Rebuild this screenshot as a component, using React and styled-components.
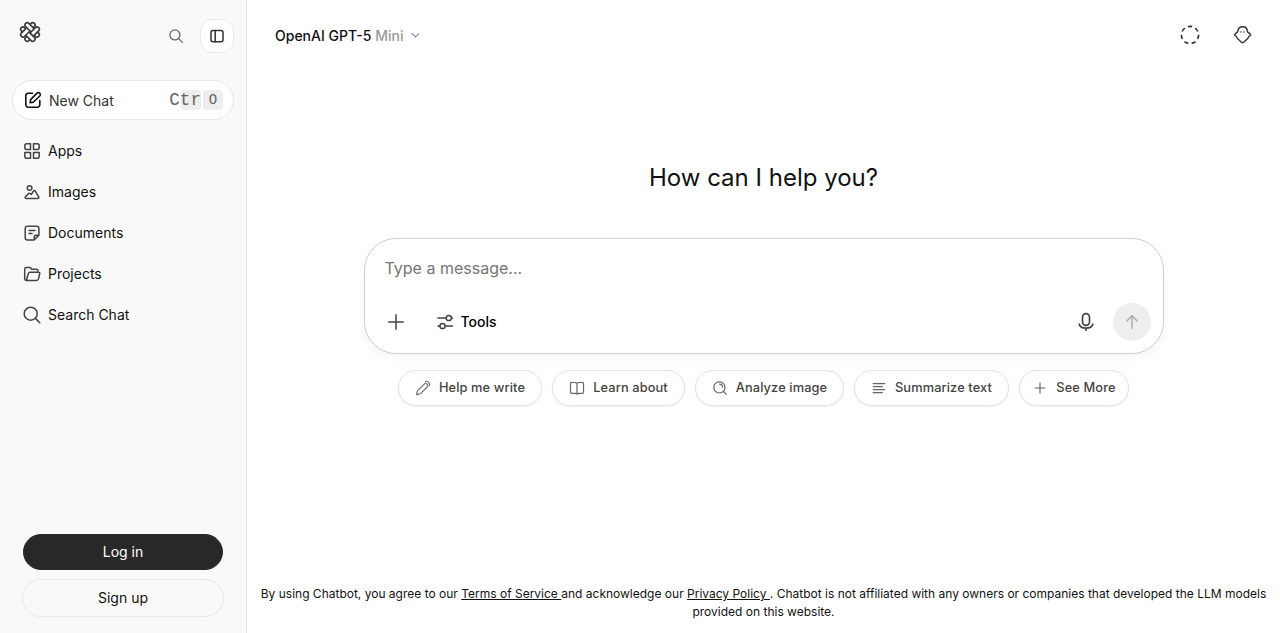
import React from "react";
import styled, { createGlobalStyle } from "styled-components";

const GlobalStyle = createGlobalStyle`
  *, *::before, *::after { box-sizing: border-box; }
  body { margin: 0; background: #fff; color: #111; font-family: Inter, "Liberation Sans", sans-serif; }
  button { font: inherit; color: inherit; background: none; border: 0; padding: 0; cursor: pointer; }
`;

const Page = styled.div`
  display: flex;
  height: 633px;
  overflow: hidden;
`;

const Sidebar = styled.aside`
  width: 247px;
  flex: none;
  display: flex;
  flex-direction: column;
  background: #f9f9f9;
  border-right: 1px solid #e5e5e5;
`;

const SidebarHeader = styled.div`
  display: flex;
  align-items: flex-start;
  height: 80px;
  padding: 19px 12px 0 19px;
`;

const Logo = styled.a`
  display: flex;
  padding-top: 2px;
  margin-right: auto;
`;

const IconButton = styled.button`
  display: flex;
  align-items: center;
  justify-content: center;
  width: 34px;
  height: 34px;
  margin-left: ${(p) => p.$gap || 0}px;
  border-radius: 12px;
  border: 1px solid ${(p) => (p.$raised ? "#e9e9e9" : "transparent")};
  background: ${(p) => (p.$raised ? "#fff" : "transparent")};
`;

const NewChat = styled.button`
  display: flex;
  align-items: center;
  width: 222px;
  height: 40px;
  margin: 0 0 0 12px;
  padding: 0 10px;
  border: 1px solid #e8e8e8;
  border-radius: 20px;
  background: #fff;
  color: #333;
  font-size: 14px;
`;

const NewChatLabel = styled.span`
  margin-left: 6px;
  margin-right: auto;
`;

const Keys = styled.span`
  display: flex;
  align-items: center;
  gap: 2px;
  color: #666;
  font-family: "Liberation Mono", monospace;
`;

const Key = styled.kbd`
  display: flex;
  align-items: center;
  justify-content: ${(p) => (p.$wide ? "flex-end" : "center")};
  width: 20px;
  height: 20px;
  border-radius: 4px;
  background: #eee;
  font-family: inherit;
  font-size: ${(p) => (p.$wide ? 17.6 : 14)}px;
  line-height: 20px;
`;

const Nav = styled.nav`
  display: flex;
  flex-direction: column;
  padding: 10px 0 0 22px;
`;

const NavItem = styled.a`
  display: flex;
  align-items: center;
  gap: 6px;
  height: 41px;
  font-size: 14px;
  color: #111;
`;

const AuthButtons = styled.div`
  display: flex;
  flex-direction: column;
  align-items: center;
  gap: 9px;
  margin-top: auto;
  padding-bottom: 16px;
`;

const AuthButton = styled.button`
  width: ${(p) => (p.$dark ? 200 : 202)}px;
  height: ${(p) => (p.$dark ? 36 : 38)}px;
  padding-bottom: 2px;
  border-radius: 19px;
  border: 1px solid ${(p) => (p.$dark ? "#282828" : "#e8e8e8")};
  background: ${(p) => (p.$dark ? "#282828" : "transparent")};
  color: ${(p) => (p.$dark ? "#fff" : "#111")};
  font-size: 14px;
`;

const Main = styled.main`
  flex: 1;
  display: flex;
  flex-direction: column;
  align-items: center;
`;

const TopBar = styled.header`
  display: flex;
  align-items: center;
  align-self: stretch;
  height: 70px;
  padding: 0 27px 0 28px;
`;

const ModelPicker = styled.button`
  display: flex;
  align-items: center;
  gap: 4px;
  margin-right: auto;
  padding-top: 1px;
  font-size: 14px;
  font-weight: 500;
  color: #111;
`;

const Muted = styled.span`
  color: #999;
`;

const TopIcons = styled.div`
  display: flex;
  gap: 33px;
`;

const Heading = styled.h1`
  margin: 91px 0 0;
  font-size: 24px;
  font-weight: 400;
  line-height: 34px;
  color: #111;
`;

const Composer = styled.section`
  display: flex;
  flex-direction: column;
  justify-content: space-between;
  width: 800px;
  height: 116px;
  margin-top: 43px;
  padding: 16px 12px 12px 20px;
  border: 1px solid #cfcfcf;
  border-radius: 32px;
  background: #fff;
  box-shadow: 0 4px 12px rgba(0, 0, 0, 0.04);
`;

const Prompt = styled.div`
  font-size: 16px;
  line-height: 26px;
  color: #757575;
`;

const ComposerRow = styled.div`
  display: flex;
  align-items: center;
  height: 38px;
`;

const ToolsButton = styled.button`
  display: flex;
  align-items: center;
  gap: 7px;
  margin: 0 auto 0 29px;
  font-size: 14px;
  line-height: 18px;
  font-weight: 500;
  color: #000;
`;

const SendButton = styled.button`
  display: flex;
  align-items: center;
  justify-content: center;
  width: 38px;
  height: 38px;
  margin-left: 17px;
  border-radius: 50%;
  background: #eee;
`;

const Suggestions = styled.div`
  display: flex;
  gap: 10px;
  margin-top: 16px;
`;

const Suggestion = styled.button`
  display: flex;
  align-items: center;
  justify-content: center;
  gap: 8px;
  width: ${(p) => p.$width}px;
  height: 36px;
  border: 1px solid #e2e2e2;
  border-radius: 18px;
  background: #fff;
  box-shadow: 0 1px 2px rgba(0, 0, 0, 0.06);
  color: #444;
  font-size: 12.8px;
  line-height: 16px;
  letter-spacing: 0.12px;
  font-weight: 500;
  white-space: nowrap;
`;

const Legal = styled.footer`
  margin-top: auto;
  padding: 0 12px 12px;
  font-size: 12px;
  line-height: 18px;
  text-align: center;
  color: #111;
`;

const Link = styled.a`
  text-decoration: underline;
`;

const Svg = styled.svg`
  display: block;
  flex: none;
  fill: none;
  stroke-linecap: round;
  stroke-linejoin: round;
`;

function Icon({ size = 20, color = "#444", weight = 1.5, children }) {
  return (
    <Svg width={size} height={size} viewBox={`0 0 ${size} ${size}`} stroke={color} strokeWidth={weight}>
      {children}
    </Svg>
  );
}

const LogoIcon = () => {
  const v = { y: -9.2, width: 4.6, height: 18.4, rx: 2.3 };
  const h = { x: -9.2, width: 18.4, height: 4.6, rx: 2.3 };
  return (
    <Svg width="22" height="22" viewBox="-11 -11 22 22" stroke="#3a3a3a" strokeWidth="1.6">
      <defs>
        <clipPath id="weave"><rect x="-7" y="0.1" width="7" height="6.9" /></clipPath>
      </defs>
      <g transform="rotate(45)" fill="#f9f9f9">
        <rect x="-5.3" {...v} />
        <rect y="-5.3" {...h} />
        <rect x="0.7" {...v} />
        <rect y="0.7" {...h} />
        <rect x="-5.3" {...v} clipPath="url(#weave)" />
      </g>
    </Svg>
  );
};

const icons = {
  apps: (
    <path d="M4.7 2.8H8.5V8.5H4.7A1.9 1.9 0 0 1 2.8 6.6V4.7A1.9 1.9 0 0 1 4.7 2.8ZM11.5 2.8H15.3A1.9 1.9 0 0 1 17.2 4.7V6.6A1.9 1.9 0 0 1 15.3 8.5H11.5ZM2.8 11.5H8.5V17.2H4.7A1.9 1.9 0 0 1 2.8 15.3ZM11.5 11.5H17.2V15.3A1.9 1.9 0 0 1 15.3 17.2H11.5Z" />
  ),
  images: (
    <>
      <circle cx="7.6" cy="6" r="2.3" />
      <path d="M4.2 16.4H15.8C16.8 16.4 17.2 15.7 16.7 14.8L13.3 9.2C12.8 8.4 11.9 8.4 11.4 9.2L9.3 12.5L8.2 11.6C7.5 11.1 6.8 11.2 6.3 11.9L3.4 14.8C2.9 15.6 3.2 16.4 4.2 16.4Z" />
    </>
  ),
  documents: (
    <>
      <path d="M12.2 16.9H5.4A2.2 2.2 0 0 1 3.2 14.7V5.4A2.2 2.2 0 0 1 5.4 3.2H14.7A2.2 2.2 0 0 1 16.9 5.4V12.2L12.2 16.9V14.2Q12.2 12.2 14.2 12.2H16.9" />
      <path d="M7 7.5H13M7 10.5H10" />
    </>
  ),
  projects: (
    <path d="M16 8V6.8A1.6 1.6 0 0 0 14.4 5.2H9.8L8.2 3.6H4.3A1.6 1.6 0 0 0 2.7 5.2V14.8A1.6 1.6 0 0 0 4.3 16.4H14.7Q16 16.4 16.4 15.1L17.7 9.8Q18 8.2 16.5 8.2H8Q6.8 8.2 6.4 9.4L4.4 16.3" />
  ),
  search: (
    <>
      <circle cx="8.7" cy="8.7" r="6.5" />
      <path d="M13.4 13.4L17.8 17.8" />
    </>
  ),
};

const navItems = [
  ["apps", "Apps"],
  ["images", "Images"],
  ["documents", "Documents"],
  ["projects", "Projects"],
  ["search", "Search Chat"],
];

export default function App() {
  return (
    <Page>
      <GlobalStyle />
      <Sidebar>
        <SidebarHeader>
          <Logo><LogoIcon /></Logo>
          <IconButton aria-label="Search">
            <Icon size={16} color="#666" weight={1.3}>
              <circle cx="6.9" cy="6.9" r="5" />
              <path d="M10.6 10.6L14.4 14.4" />
            </Icon>
          </IconButton>
          <IconButton $raised $gap={7} aria-label="Toggle sidebar">
            <Icon size={16} color="#333" weight={1.5}>
              <rect x="2" y="2.4" width="12" height="11.4" rx="2" />
              <path d="M6.2 2.4V13.8" />
            </Icon>
          </IconButton>
        </SidebarHeader>
        <NewChat>
          <Icon color="#111" weight={1.6}>
            <path d="M9.5 3.2H5.2A2.4 2.4 0 0 0 2.8 5.6V14.8A2.4 2.4 0 0 0 5.2 17.2H14.4A2.4 2.4 0 0 0 16.8 14.8V10.5" />
            <path d="M7.2 12.8L7.6 9.6L14.3 2.9Q15.5 2 16.7 3.1Q18 4.4 17 5.7L10.3 12.3Z" />
          </Icon>
          <NewChatLabel>New Chat</NewChatLabel>
          <Keys>
            <Key $wide>Ctr</Key>
            <Key>O</Key>
          </Keys>
        </NewChat>
        <Nav>
          {navItems.map(([id, label]) => (
            <NavItem key={id}>
              <Icon>{icons[id]}</Icon>
              {label}
            </NavItem>
          ))}
        </Nav>
        <AuthButtons>
          <AuthButton $dark>Log in</AuthButton>
          <AuthButton>Sign up</AuthButton>
        </AuthButtons>
      </Sidebar>
      <Main>
        <TopBar>
          <ModelPicker>
            <span>OpenAI GPT-5</span>
            <Muted>Mini</Muted>
            <Icon size={16} color="#888" weight={1.1}><path d="M4 5.6L7.4 8.8L10.8 5.6" /></Icon>
          </ModelPicker>
          <TopIcons>
            <Icon weight={1.7} color="#333">
              <circle cx="10" cy="10" r="8.6" pathLength="70" strokeDasharray="5.6 4.4" strokeDashoffset="2.8" transform="rotate(-90 10 10)" strokeLinecap="butt" />
            </Icon>
            <Icon weight={1.4} color="#333">
              <path d="M4.9 6.2C4.9 3.3 7 1.7 9.6 1.7S14.3 3.3 14.3 6.2Q14.5 6.9 15.5 7.6L17.4 9.2Q18.2 10.4 16.6 10.9Q15.8 11.2 15.3 12.5C14.3 14.4 12.5 15.3 11.1 16.9Q9.6 18.3 8.1 16.9C6.7 15.3 4.9 14.4 3.9 12.5Q3.4 11.2 2.6 10.9Q1 10.4 1.8 9.2L3.7 7.6Q4.7 6.9 4.9 6.2Z" />
              <path d="M8 6.6V7.2M10.9 6.6V7.2" strokeWidth="1.1" />
            </Icon>
          </TopIcons>
        </TopBar>
        <Heading>How can I help you?</Heading>
        <Composer>
          <Prompt>Type a message...</Prompt>
          <ComposerRow>
            <Icon size={22} weight={1.5}><path d="M11 3.8V18.2M3.8 11H18.2" /></Icon>
            <ToolsButton>
              <Icon size={18}>
                <path d="M2 5H10M15.6 5H16.5M2 13H3.8M9.2 13H16.5" />
                <circle cx="12.8" cy="5" r="2.6" />
                <circle cx="6.5" cy="13" r="2.6" />
              </Icon>
              Tools
            </ToolsButton>
            <Icon weight={1.7}>
              <rect x="6.5" y="1.7" width="7" height="11.6" rx="3.5" />
              <path d="M3.2 12.2C4.6 17.4 15.4 17.4 16.8 12.2M10 16.2V18.2" />
            </Icon>
            <SendButton aria-label="Send">
              <Icon color="#aaa" weight={1.4}><path d="M10 16.5V3.8M4.8 9L10 3.8L15.2 9" /></Icon>
            </SendButton>
          </ComposerRow>
        </Composer>
        <Suggestions>
          <Suggestion $width={144}>
            <Icon size={16} color="#666" weight={1.1}>
              <path d="M1.6 14.6L2.4 10.9L9.7 3.6Q10.6 2.8 11.5 3.6L12.7 4.8Q13.4 5.6 12.6 6.5L5.3 13.8ZM10.4 1.6Q12 .8 13.3 2.2L14.3 3.4Q15 4.6 14.4 5.4" />
            </Icon>
            Help me write
          </Suggestion>
          <Suggestion $width={133}>
            <Icon size={16} color="#666" weight={1.2}>
              <path d="M8 3.2Q7.2 2.5 6 2.5H2.6Q1.5 2.5 1.5 3.6V12.2Q1.5 13.3 2.6 13.3H6.3Q7.4 13.3 8 14Q8.6 13.3 9.7 13.3H13.4Q14.5 13.3 14.5 12.2V3.6Q14.5 2.5 13.4 2.5H10Q8.8 2.5 8 3.2V13.8" />
            </Icon>
            Learn about
          </Suggestion>
          <Suggestion $width={149}>
            <Icon size={16} color="#666" weight={1.2}>
              <circle cx="7.4" cy="7.4" r="5.6" />
              <path d="M11.5 11.5L14.3 14.3M7.6 4.1Q10.5 4.4 10.7 7.2" />
            </Icon>
            Analyze image
          </Suggestion>
          <Suggestion $width={155}>
            <Icon size={16} color="#666" weight={1.2}>
              <path d="M2.2 3.6H13.8M2.2 6.6H11.4M2.2 9.6H13.8M2.2 12.6H11.4" />
            </Icon>
            Summarize text
          </Suggestion>
          <Suggestion $width={110}>
            <Icon size={16} color="#666" weight={1.2}><path d="M8 3V13M3 8H13" /></Icon>
            See More
          </Suggestion>
        </Suggestions>
        <Legal>
          By using Chatbot, you agree to our <Link>Terms of Service </Link>and acknowledge our <Link>Privacy Policy </Link>. Chatbot is not affiliated with any owners or companies that developed the LLM models provided on this website.
        </Legal>
      </Main>
    </Page>
  );
}
